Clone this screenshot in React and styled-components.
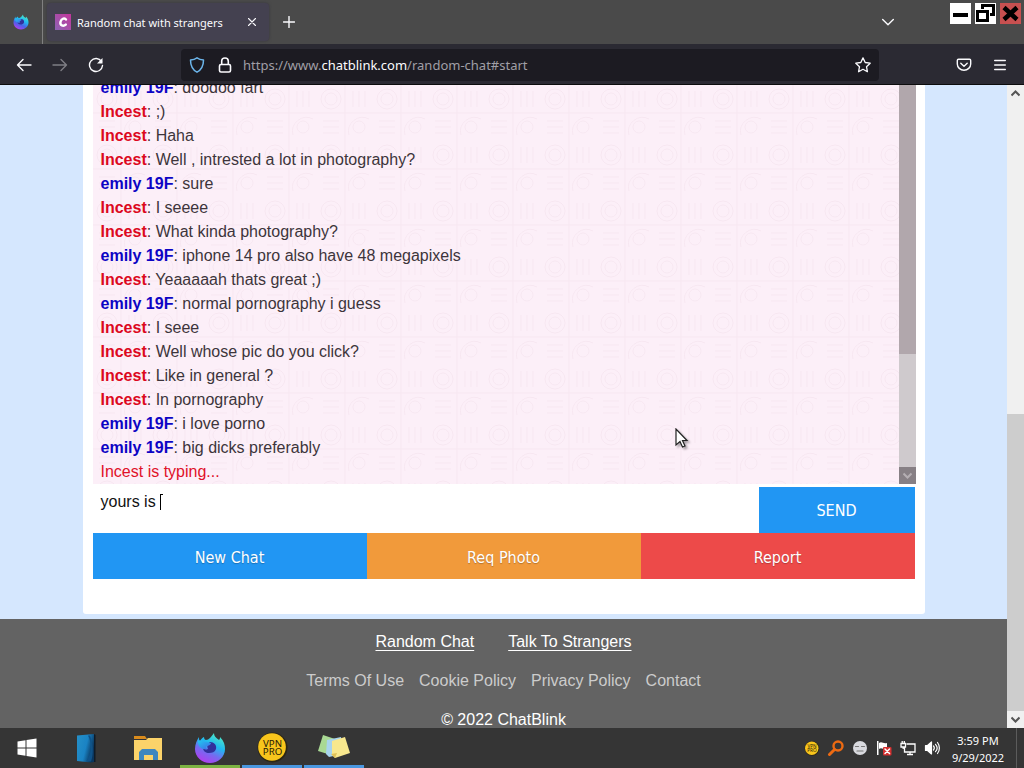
import React from 'react';
import styled, { createGlobalStyle } from 'styled-components';

const messages = [
  { from: 'emily 19F', text: 'doodoo fart' },
  { from: 'Incest', text: ';)' },
  { from: 'Incest', text: 'Haha' },
  { from: 'Incest', text: 'Well , intrested a lot in photography?' },
  { from: 'emily 19F', text: 'sure' },
  { from: 'Incest', text: 'I seeee' },
  { from: 'Incest', text: 'What kinda photography?' },
  { from: 'emily 19F', text: 'iphone 14 pro also have 48 megapixels' },
  { from: 'Incest', text: 'Yeaaaaah thats great ;)' },
  { from: 'emily 19F', text: 'normal pornography i guess' },
  { from: 'Incest', text: 'I seee' },
  { from: 'Incest', text: 'Well whose pic do you click?' },
  { from: 'Incest', text: 'Like in general ?' },
  { from: 'Incest', text: 'In pornography' },
  { from: 'emily 19F', text: 'i love porno' },
  { from: 'emily 19F', text: 'big dicks preferably' },
];

const Icon = ({ size = 16, box = 16, children, ...rest }) => (
  <svg
    width={size}
    height={size}
    viewBox={`0 0 ${box} ${box}`}
    fill='none'
    stroke='currentColor'
    strokeWidth='1.4'
    strokeLinecap='round'
    strokeLinejoin='round'
    aria-hidden='true'
    {...rest}
  >
    {children}
  </svg>
);

const FirefoxIcon = ({ size, id, cool }) => (
  <Icon size={size} box={32} stroke='none'>
    <defs>
      <linearGradient id={`${id}-a`} x1='0.8' y1='0' x2='0.3' y2='1'>
        <stop offset='0' stopColor='#54f0c0' />
        <stop offset='0.4' stopColor='#20b8f0' />
        <stop offset='0.68' stopColor={cool ? '#4b62e8' : '#7868f0'} />
        <stop offset='1' stopColor='#b43cf0' />
      </linearGradient>
      <linearGradient id={`${id}-b`} x1='0' y1='0' x2='1' y2='1'>
        <stop offset='0' stopColor='#20c8f0' />
        <stop offset='1' stopColor='#4068e8' />
      </linearGradient>
    </defs>
    <path
      d='M20 1c0 4 3 5 5 7 1-1 1-2 1-3 4 4 5 8 5 12 0 8-7 14-15 14S1 25 1 17c0-5 2-9 4-12 0 2 0 3 1 4 1-2 2-3 4-4 0 2 1 3 2 3 3 0 5-3 8-7z'
      fill={`url(#${id}-a)`}
    />
    <path d='M16 10c4 0 7 3 6 7-1 3-4 4-7 4s-6-2-6-5c1 1 3 2 5 1-1-2-1-5 2-7z' fill='#32309c' />
    <path d='M4 9c2-1 5 0 7 1l6 1c0 2-3 3-4 3-2 1-1 2 0 3-5 1-9-2-9-8z' fill={`url(#${id}-b)`} />
  </Icon>
);

const ArrowMark = ({ up }) => (
  <Icon size={9} box={9} strokeWidth='2' strokeLinecap='butt' strokeLinejoin='miter'>
    <path d={up ? 'M0.5 6.5l4-4 4 4' : 'M0.5 2.5l4 4 4-4'} />
  </Icon>
);

const TabStrip = () => (
  <Tabs>
    <PinnedTab type='button' aria-label='Firefox View'>
      <FirefoxIcon size={16} id='pin' cool />
    </PinnedTab>
    <Tab>
      <Favicon size={16} stroke='none'>
        <defs>
          <linearGradient id='fav' x1='0' y1='1' x2='1' y2='0'>
            <stop offset='0' stopColor='#8d63b4' />
            <stop offset='1' stopColor='#c4369c' />
          </linearGradient>
        </defs>
        <rect width='16' height='16' fill='url(#fav)' />
        <path d='M11 5.500C10 3.800 6.400 4 5.500 7.800s2.900 5 5.300 2.800' stroke='#fff' strokeWidth='2.4' />
      </Favicon>
      <TabTitle>Random chat with strangers</TabTitle>
      <ChromeButton type='button' $w={20} aria-label='Close tab'>
        <Icon size={8} box={8} strokeWidth='1.1'>
          <path d='M0.5 0.5l7 7M7.500 0.500l-7 7' />
        </Icon>
      </ChromeButton>
    </Tab>
    <ChromeButton type='button' $w={40} aria-label='New tab'>
      <Icon size={12} box={12}>
        <path d='M6 0.500v11M0.500 6h11' />
      </Icon>
    </ChromeButton>
    <Spacer />
    <ListTabs type='button' $w={24} aria-label='List all tabs'>
      <Icon size={12} box={12}>
        <path d='M0.700 3.500L6 8.700l5.300-5.200' />
      </Icon>
    </ListTabs>
    <WindowButtons>
      <WindowButton type='button' aria-label='Minimize'>
        <svg width='21' height='21' aria-hidden='true'>
          <path d='M3 10h15v4H3z' fill='#000' />
        </svg>
      </WindowButton>
      <WindowButton type='button' aria-label='Restore'>
        <svg width='21' height='21' fill='none' stroke='#000' strokeWidth='3' aria-hidden='true'>
          <path d='M2.500 8.500h10v9h-10zM7.500 6V2.500h11v9H15' />
        </svg>
      </WindowButton>
      <WindowButton type='button' $close aria-label='Close'>
        <svg width='21' height='21' stroke='#000' strokeWidth='4.5' aria-hidden='true'>
          <path d='M4 4.500l13 12M17 4.500l-13 12' />
        </svg>
      </WindowButton>
    </WindowButtons>
  </Tabs>
);

const NavBar = () => (
  <Toolbar>
    <ChromeButton type='button' $w={36} aria-label='Back'>
      <Icon>
        <path d='M15 8H1.500M7 2.500L1.500 8 7 13.500' />
      </Icon>
    </ChromeButton>
    <ChromeButton type='button' $w={36} $dim aria-label='Forward'>
      <Icon>
        <path d='M1 8h13.500M9 2.500L14.500 8 9 13.500' />
      </Icon>
    </ChromeButton>
    <ChromeButton type='button' $w={36} aria-label='Reload'>
      <Icon>
        <path d='M13.500 4.500A6.500 6.500 0 1 0 14.500 8.500' />
        <path d='M14.500 1v5.500H9z' fill='currentColor' stroke='none' />
      </Icon>
    </ChromeButton>
    <UrlBar>
      <Icon stroke='#6cb5ea' strokeWidth='1.5'>
        <path d='M8 0.800c2 1.500 4 2 6.500 2.200 0 6-1.500 9.500-6.500 12.200C3 12.500 1.500 9 1.500 3 4 2.800 6 2.300 8 0.800z' />
      </Icon>
      <Icon strokeWidth='1.6'>
        <rect x='2.500' y='7.500' width='11' height='7.500' rx='1.500' />
        <path d='M4.700 7V4.300a3.300 3.300 0 0 1 6.600 0V7' />
      </Icon>
      <Url>
        https://www.<b>chatblink.com</b>/random-chat#start
      </Url>
      <Icon strokeWidth='1.300'>
        <path d='M8 0.900l2.200 4.600 5 0.700-3.700 3.500 0.900 5L8 12.300l-4.400 2.400 0.900-5L0.800 6.200l5-0.700z' />
      </Icon>
    </UrlBar>
    <Spacer />
    <ChromeButton type='button' $w={36} aria-label='Save to Pocket'>
      <Icon>
        <path d='M2.500 2.200h11c0.700 0 1.200 0.500 1.200 1.200V7a6.700 6.200 0 0 1-13.400 0V3.400c0-0.700 0.500-1.200 1.200-1.200z' />
        <path d='M4.800 6.200L8 9.200l3.200-3' />
      </Icon>
    </ChromeButton>
    <ChromeButton type='button' $w={36} aria-label='Menu'>
      <Icon size={12} box={12}>
        <path d='M0.700 1.500h10.600M0.700 6h10.600M0.700 10.500h10.600' />
      </Icon>
    </ChromeButton>
  </Toolbar>
);

const Chat = () => (
  <Card>
    <LogFrame>
      <Log>
        {messages.map((message, i) => (
          <Message key={i}>
            <Name $own={message.from === 'emily 19F'}>{message.from}</Name>: {message.text}
          </Message>
        ))}
        <Typing>Incest is typing...</Typing>
      </Log>
      <LogScrollbar>
        <LogThumb />
        <ScrollArrow $inner>
          <ArrowMark />
        </ScrollArrow>
      </LogScrollbar>
    </LogFrame>
    <Compose>
      <MessageBox>
        <MessageInput aria-label='Message' defaultValue='yours is ' spellCheck={false} />
        <Caret />
      </MessageBox>
      <SendButton type='button'>SEND</SendButton>
    </Compose>
    <Actions>
      <ActionButton type='button' $color='#2196f3'>New Chat</ActionButton>
      <ActionButton type='button' $color='#f19a3b'>Req Photo</ActionButton>
      <ActionButton type='button' $color='#ed4a49'>Report</ActionButton>
    </Actions>
  </Card>
);

const VpnIcon = ({ size }) => (
  <Icon size={size} box={32} stroke='none'>
    <circle cx='16' cy='16' r='15.500' fill='#2b2615' />
    <circle cx='15.500' cy='15.500' r='14.300' fill='#f8c51c' />
    <text x='16' y='15' textAnchor='middle' fontSize='10' fontFamily='Noto Sans, sans-serif' fill='#1f1a08'>VPN</text>
    <text x='16' y='24' textAnchor='middle' fontSize='10' fontFamily='Noto Sans, sans-serif' fill='#1f1a08'>PRO</text>
  </Icon>
);

const TaskBar = () => (
  <Taskbar>
    <TaskButton type='button' $start aria-label='Start'>
      <Icon size={20} box={20} stroke='none' fill='#fff'>
        <path d='M0.500 3.500l8-1.200v7.200h-8zM9.500 2.100L19.500 0.600v8.900h-10zM0.500 10.500h8v7.200l-8-1.200zM9.500 10.500h10v8.900l-10-1.500z' />
      </Icon>
    </TaskButton>
    <TaskButton type='button' aria-label='Phone'>
      <Icon size={30} box={30} stroke='none'>
        <defs>
          <linearGradient id='phone' x1='0' y1='0' x2='1' y2='0.400'>
            <stop offset='0' stopColor='#2590c8' />
            <stop offset='0.600' stopColor='#1a83c4' />
            <stop offset='1' stopColor='#0a365e' />
          </linearGradient>
        </defs>
        <path d='M6 2.500L23 1v28l-3 0.500L6 28z' fill='url(#phone)' />
        <path d='M17 2.500c4 8 4 18-2 26h5c3-8 2-18-1-26z' fill='#0f5288' />
        <path d='M23 1l1.500 1v27L23 29z' fill='#101c28' />
      </Icon>
    </TaskButton>
    <TaskButton type='button' aria-label='Files'>
      <Icon size={30} box={30} stroke='none'>
        <path d='M1 3h11l2 3h-13z' fill='#d98b1c' />
        <path d='M1 7h12l2-2h14v22H1z' fill='#fbd36a' />
        <path d='M6 27V19l3-3h13l3 3v8h-5v-5h-9v5z' fill='#3e87bf' />
      </Icon>
    </TaskButton>
    <TaskButton type='button' $line='#7cb342' aria-label='Firefox'>
      <FirefoxIcon size={32} id='task' />
    </TaskButton>
    <TaskButton type='button' $line='#4a97e0' aria-label='VPN Pro'>
      <VpnIcon size={31} />
    </TaskButton>
    <TaskButton type='button' $line='#4a97e0' aria-label='Sticky Notes'>
      <Icon size={32} box={32} stroke='none'>
        <path d='M5 3l12 4-4 16L0 19z' fill='#a9d994' />
        <path d='M9 8l14-3 2 17-14 3-3-3z' fill='#a8d4ee' />
        <path d='M14 9l13-4 5 16-15 5-3-3z' fill='#f8e88e' />
        <path d='M13 22l4 4 2-5z' fill='#e0c258' />
      </Icon>
    </TaskButton>
    <Spacer />
    <Tray>
      <VpnIcon size={15} />
      <Icon size={16} stroke='#ed6a12' strokeWidth='2.400'>
        <circle cx='10' cy='6' r='4.500' />
        <path d='M6.500 9.500l-5 5' strokeWidth='3' />
      </Icon>
      <Icon size={16} stroke='#777' strokeWidth='1.2'>
        <circle cx='8' cy='8' r='7' fill='#d9dadf' stroke='none' />
        <path d='M3.500 6.500h3M9.500 6.500h3M5 11h6' />
      </Icon>
      <Icon size={16} stroke='none'>
        <path d='M1 1h1.500v14H1z' fill='#fff' />
        <path d='M3 3c3-2 4 1 8 0v6c-4 1-5-2-8 0z' fill='#fff' />
        <rect x='7' y='7' width='8.500' height='8.500' rx='1' fill='#d42f2f' />
        <path d='M9 9l4.500 4.500M13.500 9L9 13.500' stroke='#fff' strokeWidth='1.500' />
      </Icon>
      <Icon size={16} stroke='#fff' strokeLinecap='butt' strokeLinejoin='miter' strokeWidth='1.300'>
        <path d='M6.500 4H15v8H4.500V7M7 14.500h6M10 12v2.500' />
        <path d='M1 3.500h4.500V7H1zM2.200 1v2.500M4.300 1v2.500M3.200 7v2' />
      </Icon>
      <Icon size={16} stroke='#fff' strokeWidth='1.200'>
        <path d='M1.500 5.500h2L7.500 2v12L3.500 10.500h-2z' fill='#fff' />
        <path d='M9.500 6c1 1.200 1 2.800 0 4M11.500 4.300c2 2.200 2 5.200 0 7.400M13.500 2.500c2.500 3.200 2.500 7.800 0 11' />
      </Icon>
    </Tray>
    <Clock>
      <time>3:59 PM</time>
      <time>9/29/2022</time>
    </Clock>
    <ShowDesktop type='button' aria-label='Show desktop' />
  </Taskbar>
);

const App = () => (
  <Screen>
    <GlobalStyle />
    <TabStrip />
    <NavBar />
    <Viewport>
      <Page>
        <Chat />
        <Footer>
          <FooterLinks $gap={34}>
            <FooterLink href='#random' $main>Random Chat</FooterLink>
            <FooterLink href='#talk' $main>Talk To Strangers</FooterLink>
          </FooterLinks>
          <FooterLinks $gap={15}>
            <FooterLink href='#terms'>Terms Of Use</FooterLink>
            <FooterLink href='#cookies'>Cookie Policy</FooterLink>
            <FooterLink href='#privacy'>Privacy Policy</FooterLink>
            <FooterLink href='#contact'>Contact</FooterLink>
          </FooterLinks>
          <div>© 2022 ChatBlink</div>
        </Footer>
      </Page>
      <PageScrollbar>
        <ScrollArrow>
          <ArrowMark up />
        </ScrollArrow>
        <PageTrack />
        <PageThumb />
        <ScrollArrow>
          <ArrowMark />
        </ScrollArrow>
      </PageScrollbar>
    </Viewport>
    <TaskBar />
    <Pointer width='14' height='22' viewBox='0 0 14 22' aria-hidden='true'>
      <path d='M1 1v16l4-3.500 2.500 5.500 2.500-1-2.500-5.500H12z' fill='#fff' stroke='#222' strokeWidth='1.200' />
    </Pointer>
  </Screen>
);

export default App;

const GlobalStyle = createGlobalStyle`
  * {
    box-sizing: border-box;
  }
  body {
    margin: 0;
    overflow: hidden;
    font-family: 'Liberation Sans', Arial, sans-serif;
    font-size: 16px;
  }
  button {
    border: none;
    padding: 0;
    font-family: inherit;
    color: inherit;
    background: none;
  }
`;

const Screen = styled.div`
  display: flex;
  flex-direction: column;
  height: 100vh;
`;
const Spacer = styled.div`
  flex: 1;
`;

const Tabs = styled.div`
  display: flex;
  align-items: center;
  flex: none;
  height: 44px;
  background-color: #4a4a4a;
  color: #fbfbfe;
  font-family: 'Noto Sans', sans-serif;
`;
const PinnedTab = styled.button`
  width: 43px;
  height: 44px;
  border-right: 1px solid #808080;
  > svg {
    display: block;
    margin: 0 auto;
  }
`;
const Tab = styled.div`
  display: flex;
  align-items: center;
  width: 222px;
  height: 38px;
  margin-left: 4px;
  padding: 0 7px 0 8px;
  border-radius: 4px;
  background-color: #444150;
  box-shadow: 0 0 3px #38363f;
`;
const Favicon = styled(Icon)`
  flex: none;
`;
const TabTitle = styled.span`
  flex: 1;
  margin-left: 6px;
  font-size: 11px;
  white-space: nowrap;
`;
const ChromeButton = styled.button`
  display: flex;
  align-items: center;
  justify-content: center;
  flex: none;
  width: ${({ $w }) => $w}px;
  height: 32px;
  opacity: ${({ $dim }) => ($dim ? 0.4 : 1)};
`;
const ListTabs = styled(ChromeButton)`
  margin-right: 50px;
`;
const WindowButtons = styled.div`
  display: flex;
  align-self: flex-start;
  gap: 4px;
  padding: 3px 3px 0 0;
`;
const WindowButton = styled.button`
  display: flex;
  width: 21px;
  height: 21px;
  background-color: ${({ $close }) => ($close ? '#c75050' : '#fff')};
`;

const Toolbar = styled.div`
  display: flex;
  align-items: center;
  flex: none;
  height: 41px;
  padding: 1px 6px 0;
  background-color: #2b2a33;
  border-bottom: 1px solid #0c0c0d;
  color: #fbfbfe;
`;
const UrlBar = styled.div`
  display: flex;
  align-items: center;
  gap: 12px;
  flex: 1 1 698px;
  max-width: 698px;
  height: 32px;
  margin-left: 67px;
  padding: 0 8px;
  border-radius: 4px;
  background-color: #1c1b22;
`;
const Url = styled.span`
  flex: 1;
  margin-left: -2px;
  font-family: 'Noto Sans', sans-serif;
  font-size: 13px;
  color: #a09fa6;
  > b {
    font-weight: 400;
    color: #fbfbfe;
  }
`;

const Viewport = styled.div`
  display: flex;
  flex: 1;
  min-height: 0;
`;
const Page = styled.main`
  display: flex;
  flex-direction: column;
  flex: 1;
  min-width: 0;
  background-color: #d5e7fe;
`;
const Card = styled.section`
  display: flex;
  flex-direction: column;
  flex: 1;
  min-height: 0;
  width: 100%;
  max-width: 842px;
  margin: 0 auto 5px;
  padding: 0 9px 35px 10px;
  border-radius: 0 0 3px 3px;
  background-color: #fff;
`;
const LogFrame = styled.div`
  display: flex;
  flex: 1;
  min-height: 0;
`;
const logPattern = encodeURIComponent(
  `<svg xmlns='http://www.w3.org/2000/svg' width='56' height='56' fill='none' stroke='#f7e7f1'>
    <circle cx='14' cy='14' r='6'/><circle cx='14' cy='14' r='10'/><circle cx='42' cy='42' r='6'/>
    <path d='M0 28h28v28M28 0v28h28M36 6v16M42 6v16M48 6v16M6 36h16M6 42h16M6 48h16M32 50a14 14 0 0 1 20-16'/>
  </svg>`
);
const Log = styled.div`
  display: flex;
  flex-direction: column;
  justify-content: flex-end;
  flex: 1;
  padding: 0 8px;
  overflow: hidden;
  line-height: 24px;
  color: #3d353b;
  background: #fceff8 url("data:image/svg+xml,${logPattern}");
`;
const Message = styled.div`
  flex: none;
`;
const Name = styled.b`
  color: ${({ $own }) => ($own ? '#0c04c4' : '#dc0820')};
`;
const Typing = styled.div`
  flex: none;
  color: #e01028;
`;
const LogScrollbar = styled.div`
  display: flex;
  flex-direction: column;
  width: 17px;
  background-color: #cfcacd;
`;
const LogThumb = styled.div`
  flex: 1;
  margin-bottom: 113px;
  background-color: #b1a7ac;
`;
const ScrollArrow = styled.div`
  display: flex;
  align-items: center;
  justify-content: center;
  flex: none;
  height: 17px;
  color: ${({ $inner }) => ($inner ? '#b5afb3' : '#555')};
  background-color: ${({ $inner }) => ($inner ? '#878085' : '#f0f0f0')};
`;
const Compose = styled.div`
  display: flex;
  margin-top: 3px;
  padding-right: 1px;
`;
const MessageBox = styled.div`
  position: relative;
  flex: 1;
  height: 46px;
`;
const MessageInput = styled.textarea`
  display: block;
  width: 100%;
  height: 46px;
  padding: 5px 8px;
  border: none;
  outline: none;
  resize: none;
  font-family: inherit;
  font-size: 16px;
  line-height: 20px;
  color: #111;
`;
const Caret = styled.span`
  position: absolute;
  left: 67px;
  top: 7px;
  width: 3px;
  height: 16px;
  border-left: 1px solid #000;
  border-top: 1px solid #000;
`;
const SendButton = styled.button`
  width: 156px;
  font-family: 'DejaVu Sans Condensed', 'DejaVu Sans', sans-serif;
  font-size: 16px;
  color: #fff;
  background-color: #2196f3;
`;
const Actions = styled.div`
  display: flex;
  padding-right: 1px;
`;
const ActionButton = styled.button`
  flex: 1;
  height: 46px;
  padding-top: 2px;
  font-family: 'DejaVu Sans Condensed', 'DejaVu Sans', sans-serif;
  font-size: 16px;
  color: #fff;
  text-shadow: 0 1px 1px #00000040;
  background-color: ${({ $color }) => $color};
`;

const Footer = styled.footer`
  display: flex;
  flex-direction: column;
  align-items: center;
  gap: 23px;
  padding-top: 15px;
  line-height: 16px;
  color: #fff;
  background-color: #636363;
`;
const FooterLinks = styled.nav`
  display: flex;
  gap: ${({ $gap }) => $gap}px;
`;
const FooterLink = styled.a`
  color: ${({ $main }) => ($main ? '#fff' : '#ccc')};
  text-decoration: ${({ $main }) => ($main ? 'underline' : 'none')};
  text-underline-offset: 3px;
`;

const PageScrollbar = styled.div`
  display: flex;
  flex-direction: column;
  width: 17px;
  background-color: #f0f0f0;
`;
const PageTrack = styled.div`
  flex: 313;
`;
const PageThumb = styled.div`
  flex: 297;
  background-color: #cdcdcd;
`;

const Taskbar = styled.div`
  display: flex;
  flex: none;
  height: 40px;
  color: #fff;
  background-color: #353535;
`;
const TaskButton = styled.button`
  display: flex;
  align-items: center;
  justify-content: center;
  width: ${({ $start }) => ($start ? 54 : 60)}px;
  margin-right: 2px;
  padding-top: 2px;
  border-bottom: 3px solid ${({ $line }) => $line || 'transparent'};
`;
const Tray = styled.div`
  display: flex;
  align-items: center;
  > svg {
    width: 24px;
  }
`;
const Clock = styled.div`
  display: flex;
  flex-direction: column;
  justify-content: center;
  width: 68px;
  padding-top: 1px;
  font-family: 'Noto Sans', sans-serif;
  font-size: 11px;
  line-height: 17px;
  text-align: center;
  white-space: nowrap;
`;
const ShowDesktop = styled.button`
  width: 8px;
  margin-left: 4px;
  border-left: 1px solid #5c5c5c;
`;

const Pointer = styled.svg`
  position: fixed;
  left: 675px;
  top: 428px;
  filter: drop-shadow(2px 2px 1px #00000055);
`;
